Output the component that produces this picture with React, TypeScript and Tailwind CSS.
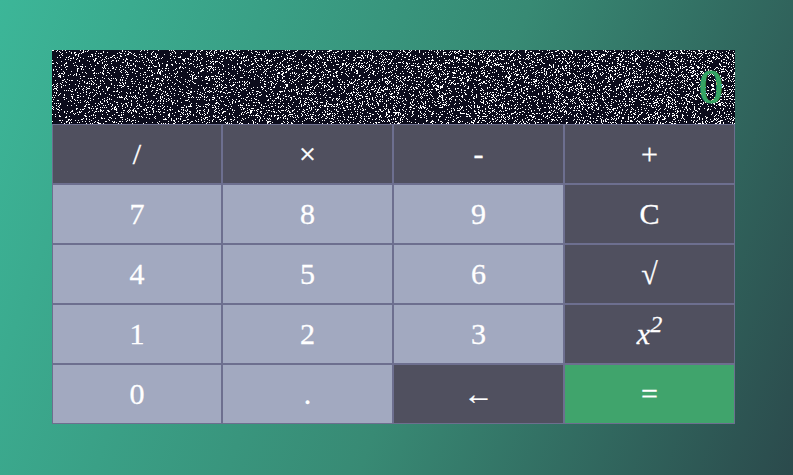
import { useMemo } from 'react'

type Key = { label: React.ReactNode; tone: 'dark' | 'light' | 'green' }

const keys: Key[] = [
  { label: '/', tone: 'dark' },
  { label: '×', tone: 'dark' },
  { label: '-', tone: 'dark' },
  { label: '+', tone: 'dark' },
  { label: '7', tone: 'light' },
  { label: '8', tone: 'light' },
  { label: '9', tone: 'light' },
  { label: 'C', tone: 'dark' },
  { label: '4', tone: 'light' },
  { label: '5', tone: 'light' },
  { label: '6', tone: 'light' },
  { label: '√', tone: 'dark' },
  { label: '1', tone: 'light' },
  { label: '2', tone: 'light' },
  { label: '3', tone: 'light' },
  { label: <i>x<sup className="text-[24px]">2</sup></i>, tone: 'dark' },
  { label: '0', tone: 'light' },
  { label: '.', tone: 'light' },
  { label: '←', tone: 'dark' },
  { label: '=', tone: 'green' },
]

const toneClass = {
  dark: 'bg-[#50505f]',
  light: 'bg-[#a2a9c0]',
  green: 'bg-[#40a46c]',
}

// white speckle behind the readout, a little denser towards the right
function Speckle() {
  const d = useMemo(() => {
    let seed = 12345
    let out = ''
    for (let y = 0; y < 74; y++) {
      for (let x = 0; x < 683; x++) {
        seed = (seed * 1664525 + 1013904223) >>> 0
        if ((seed >>> 8) / 16777216 < 0.13 + (x / 683) * 0.07) out += `M${x} ${y}h1v1h-1z`
      }
    }
    return out
  }, [])
  return (
    <svg className="absolute inset-0" width="683" height="74" shapeRendering="crispEdges">
      <path d={d} fill="#ffffff" />
    </svg>
  )
}

export default function App() {
  return (
    <div className="h-[475px] w-[793px] overflow-hidden bg-[linear-gradient(110deg,#3cb698_0%,#388a74_55%,#2b4a4c_100%)] pl-[52px] pt-[50px] font-['Liberation_Serif',serif]">
      <div className="w-[683px]">
        <div className="relative flex h-[74px] items-center justify-end overflow-hidden bg-[#0c0c1c] pr-[12px]">
          <Speckle />
          <span className="relative text-[48px] leading-none text-[#35a564] [-webkit-text-stroke:1px_#35a564]">0</span>
        </div>
        <div className="grid grid-cols-[170px_171px_171px_171px]">
          {keys.map((k, i) => (
            <div
              key={i}
              className={`flex h-[60px] items-center justify-center border border-[#6d6f8f] text-[30px] leading-none text-white [-webkit-text-stroke:0.3px_#ffffff] ${toneClass[k.tone]}`}
            >
              {k.label}
            </div>
          ))}
        </div>
      </div>
    </div>
  )
}
